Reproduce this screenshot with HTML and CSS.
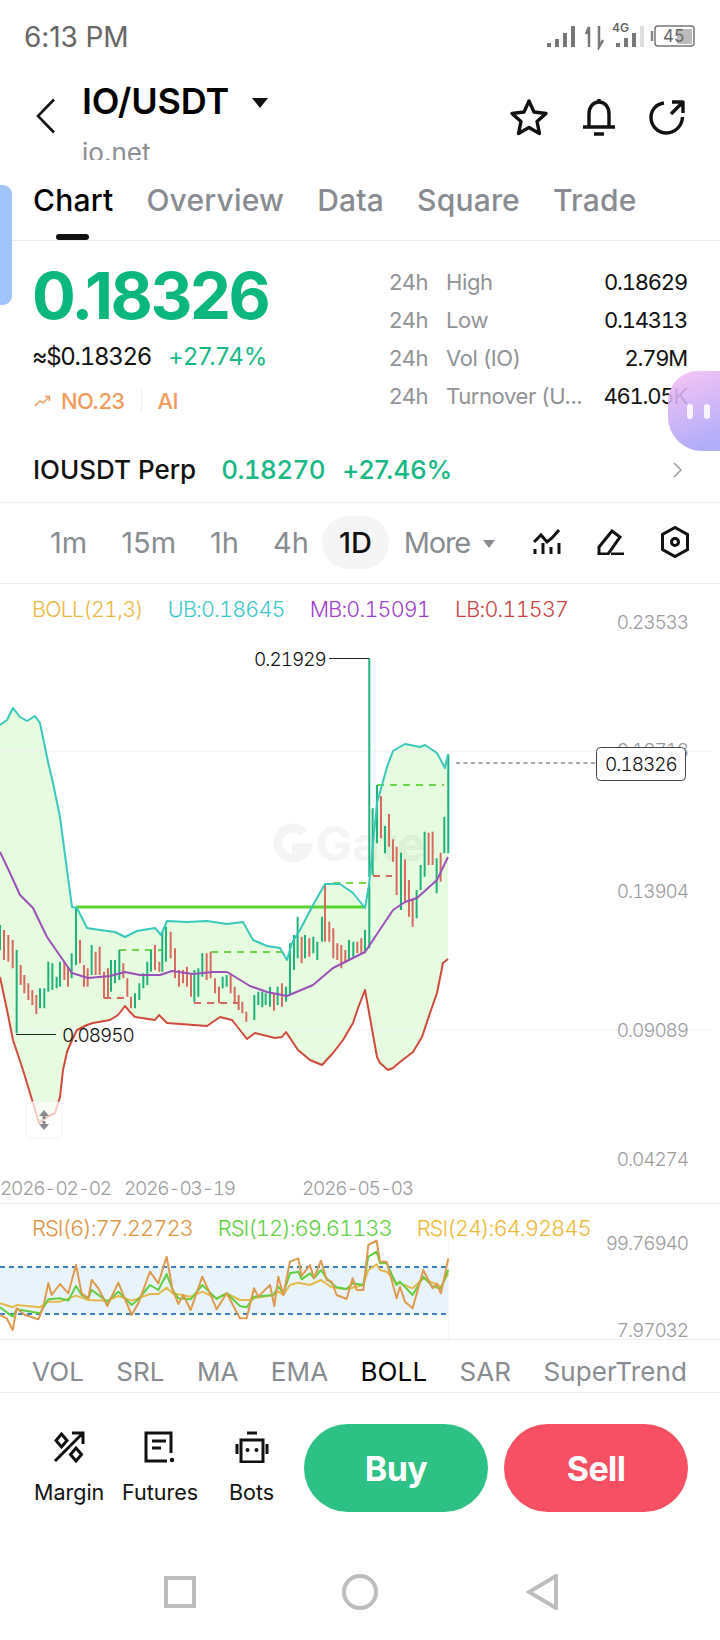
FILE: index.html
```html
<!DOCTYPE html>
<html lang="en">

<head>
    <meta charset="UTF-8">
    <meta name="viewport" content="width=device-width, initial-scale=1.0">
    <title>IO/USDT</title>
    <link rel="stylesheet" href="styles.css">
</head>

<body>
    <div class="page">
        <div class="side-tab"></div>
        <div class="float-bot">
            <span></span>
            <span></span>
        </div>

        <div class="status">
            <span class="status-time">6:13 PM</span>
            <svg class="status-icons" width="150" height="30" viewBox="546 20 150 30">
                <g class="bars">
                    <path d="M549 43v4M557 39v8M565 33v14M573 26v21" />
                    <path d="M618 43v4M626 38v9M634 33v14" />
                    <path class="bar-off" d="M642 26v21" />
                </g>
                <path class="arrows" d="M589 47V27l-3 7M599 26v21l4-7" />
                <text class="net" x="612" y="32">4G</text>
                <rect class="batt" x="655" y="26" width="39" height="20" rx="3" />
                <rect class="batt-fill" x="677" y="29" width="15" height="15" />
                <path class="batt-tip" d="M652 31v10" />
                <text class="batt-num" x="663" y="42">45</text>
            </svg>
        </div>

        <div class="header">
            <svg class="back" width="20" height="36" viewBox="0 0 20 36">
                <path d="M18 1.500 2 18l16 16.500" />
            </svg>
            <div class="title">
                <div class="pair">IO/USDT <i class="caret"></i></div>
                <div class="pair-name">io.net</div>
            </div>
            <div class="header-actions">
                <svg width="40" height="38" viewBox="0 0 40 38">
                    <path d="M20 3l5 11 12 1.500-9 8 2.500 12L20 29.500 9.500 35.500 12 23.500l-9-8L15 14z" />
                </svg>
                <svg width="34" height="40" viewBox="0 0 34 40">
                    <path d="M17 2v3M1 30h32M7 30V17C7 10 11 5 17 5s10 5 10 12v13M12 37h10" />
                </svg>
                <svg width="36" height="36" viewBox="0 0 36 36">
                    <path d="M15 4C7 5 2 11 2 18.500 2 27 9 34 17.500 34S33 27 33.500 18M22 15 33 4M23 3h11v11" />
                </svg>
            </div>
        </div>

        <div class="tabs">
            <span class="tab active">Chart</span>
            <span class="tab">Overview</span>
            <span class="tab">Data</span>
            <span class="tab">Square</span>
            <span class="tab">Trade</span>
        </div>

        <div class="summary">
            <div class="summary-left">
                <div class="price">0.18326</div>
                <div class="price-sub">
                    <span>≈$0.18326</span>
                    <span class="up">+27.74%</span>
                </div>
                <div class="rank">
                    <svg width="17" height="12" viewBox="0 0 17 12">
                        <path d="M1 11l5-5 3 2 6-6M11 1.500h4.500V6" />
                    </svg>
                    <span>NO.23</span>
                    <i class="rank-line"></i>
                    <span>AI</span>
                </div>
            </div>
            <div class="stats">
                <span class="muted">24h</span><span class="muted">High</span><span class="stat-val">0.18629</span>
                <span class="muted">24h</span><span class="muted">Low</span><span class="stat-val">0.14313</span>
                <span class="muted">24h</span><span class="muted">Vol (IO)</span><span class="stat-val">2.79M</span>
                <span class="muted">24h</span><span class="muted">Turnover (U...</span><span class="stat-val">461.05K</span>
            </div>
        </div>

        <div class="perp">
            <span class="perp-name">IOUSDT Perp</span>
            <span class="up perp-last">0.18270</span>
            <span class="up perp-change">+27.46%</span>
            <svg class="perp-arrow" width="10" height="16" viewBox="0 0 10 16">
                <path d="M1 1l7 7-7 7" />
            </svg>
        </div>

        <div class="intervals">
            <span class="interval">1m</span>
            <span class="interval">15m</span>
            <span class="interval">1h</span>
            <span class="interval">4h</span>
            <span class="interval selected">1D</span>
            <span class="interval more">More <i class="caret small"></i></span>
            <div class="chart-tools">
                <svg width="28" height="26" viewBox="0 0 28 26">
                    <path d="M1 13l7-7 6 7 5-4 7-8M2 20v5M10 14v11M18 18v7M26 14v11" />
                </svg>
                <svg width="28" height="26" viewBox="0 0 28 26">
                    <path d="M2 25v-7L15 2l8 6-12 17zM14 25h13" />
                </svg>
                <svg width="28" height="32" viewBox="0 0 28 32">
                    <path d="M14 1.500 26.500 8.500v15L14 30.500 1.500 23.500v-15z" />
                    <circle cx="14" cy="16" r="3.500" />
                </svg>
            </div>
        </div>

        <div class="chart">
            <svg class="canvas" width="720" height="619" viewBox="0 584 720 619">
                <!-- band fill: upper band, then lower band backwards -->
                <polygon class="band" points="0,725 7,720 13,708 20,717 27,721 35,716 40,723 48,762 53,783 60,817 67,870 72,907 77,908 87,928 100,930 115,932 125,937 137,931 155,928 161,935 167,921 187,922 207,921 227,924 243,922 253,940 267,946 280,948 287,960 292,943 300,930 313,905 325,884 340,884 353,893 365,908 369,885 377,803 387,767 393,751 405,744 420,747 425,745 437,753 445,768 448,754 448,959 443,963 437,993 430,1013 422,1037 413,1052 400,1062 393,1068 388,1070 380,1063 377,1057 365,990 358,1008 353,1023 343,1040 333,1053 322,1065 310,1060 298,1050 286,1032 282,1037 275,1038 255,1033 247,1039 232,1020 220,1017 207,1026 167,1023 159,1015 155,1020 135,1017 130,1012 125,1006 118,1015 110,1020 93,1023 87,1025 77,1030 72,1040 67,1052 63,1070 60,1097 55,1113 47,1117 39,1123 33,1103 23,1070 13,1040 7,1010 0,977" />

                <g class="mark">
                    <path class="mark-ring" d="M304 833a15 15 0 1 0 3 15h-15" />
                    <text class="mark-text" x="316" y="861">Gate</text>
                </g>

                <path class="grid" d="M0 751H712M0 1030H712" />

                <text class="axis" x="688" y="629" text-anchor="end">0.23533</text>
                <text class="axis" x="688" y="757" text-anchor="end">0.18718</text>
                <text class="axis" x="688" y="898" text-anchor="end">0.13904</text>
                <text class="axis" x="688" y="1037" text-anchor="end">0.09089</text>
                <text class="axis" x="688" y="1166" text-anchor="end">0.04274</text>

                <text class="axis date" x="0" y="1195">2026-02-02</text>
                <text class="axis date" x="124" y="1195">2026-03-19</text>
                <text class="axis date" x="302" y="1195">2026-05-03</text>

                <path class="dash-green" d="M119 950H162M211 952H290M333 883H369M377 785H444" />
                <path class="dash-red" d="M104 998H131M194 1003H239M373 876H392" />
                <path class="level" d="M76 907H365" />

                <!-- candles below y=880 are in 3x units of the lower half -->
                <g transform="translate(0 880) scale(.3333)">
                    <path class="candle-up" d="M0 135V210M50 210V460M120 325V385M133 325V385M145 245V335M157 250V330M170 290V325M180 245V320M215 220V295M228 85V255M275 195V285M333 240V335M345 240V310M358 210V300M405 340V385M418 310V360M430 280V325M442 245V315M453 210V275M487 155V275M498 140V245M583 270V365M595 265V350M607 220V290M668 290V325M680 285V320M763 345V420M775 335V375M787 335V382M797 340V375M810 320V380M833 320V375M858 320V365M870 190V345M882 165V270M893 110V235M915 165V235M940 170V220M952 185V240M966 110V185M1047 180V240M1060 185V230M1095 150V220M1108 15V205M1250 30V115M1262 -45V30M1310 -65V40" />
                    <path class="candle-down" d="M12 150V240M25 165V245M38 180V265M62 255V315M73 285V340M85 310V360M97 330V375M109 345V402M193 245V300M204 260V320M240 180V250M252 255V320M263 265V320M287 215V285M299 200V285M312 275V355M324 265V355M370 250V295M382 295V350M393 350V385M465 195V270M478 245V275M512 155V235M525 205V295M537 270V320M549 270V310M561 260V320M573 280V350M620 220V300M632 215V295M645 295V340M657 320V370M692 280V340M704 320V370M716 345V390M727 365V400M739 395V425M822 340V392M846 310V380M905 170V250M928 175V230M975 15V185M988 125V185M1000 145V235M1012 190V240M1024 195V265M1036 210V250M1072 185V220M1084 175V220M1190 -100V45M1227 0V110M1238 60V140M1322 -82V5" />
                </g>
                <!-- same again for the part above the fold of the crop -->
                <g transform="translate(0 590) scale(.3333)">
                    <path class="candle-up" d="M1108 205V860M1118 655V855M1131 585V760M1155 708V790M1203 788V960M1274 725V860M1333 680V790M1345 492V790" />
                    <path class="candle-down" d="M1143 618V745M1167 672V770M1179 748V815M1215 808V935M1286 728V825M1298 725V825" />
                </g>

                <polyline class="line-mb" points="0,852 10,873 20,895 33,908 47,937 65,963 72,973 88,978 110,976 125,972 140,975 160,975 172,971 193,974 213,972 227,972 250,986 267,992 287,996 313,985 333,968 365,952 393,910 405,902 417,898 437,880 448,857" />
                <polyline class="line-ub" points="0,725 7,720 13,708 20,717 27,721 35,716 40,723 48,762 53,783 60,817 67,870 72,907 77,908 87,928 100,930 115,932 125,937 137,931 155,928 161,935 167,921 187,922 207,921 227,924 243,922 253,940 267,946 280,948 287,960 292,943 300,930 313,905 325,884 340,884 353,893 365,908 369,885 377,803 387,767 393,751 405,744 420,747 425,745 437,753 445,768 448,754" />
                <polyline class="line-lb" points="0,977 7,1010 13,1040 23,1070 33,1103 39,1123 47,1117 55,1113 60,1097 63,1070 67,1052 72,1040 77,1030 87,1025 93,1023 110,1020 118,1015 125,1006 130,1012 135,1017 155,1020 159,1015 167,1023 207,1026 220,1017 232,1020 247,1039 255,1033 275,1038 282,1037 286,1032 298,1050 310,1060 322,1065 333,1053 343,1040 353,1023 358,1008 365,990 377,1057 380,1063 388,1070 393,1068 400,1062 413,1052 422,1037 430,1013 437,993 443,963 448,959" />

                <path class="leader" d="M329 658.500H369M16 1034.500H56" />
                <text class="mark-price" x="254" y="666">0.21929</text>
                <text class="mark-price" x="62" y="1042">0.08950</text>

                <path class="last-line" d="M456 763H596" />
                <rect class="last-tag" x="596.500" y="747.500" width="89" height="33" rx="4" />
                <text class="mark-price" x="605" y="771">0.18326</text>

                <rect class="resize" x="26" y="1102" width="36" height="36" rx="5" />
                <path class="resize-arrow" d="M44 1110l-5 6h3.500v3h3v-3H49zM44 1130l-5-6h3.500v-3h3v3H49z" />
            </svg>
            <div class="legend">
                <span class="c-boll">BOLL(21,3)</span>
                <span class="c-ub">UB:0.18645</span>
                <span class="c-mb">MB:0.15091</span>
                <span class="c-lb">LB:0.11537</span>
            </div>
        </div>

        <div class="rsi">
            <svg class="canvas" width="720" height="135" viewBox="0 1204 720 135">
                <rect class="rsi-band" x="0" y="1267" width="448" height="47" />
                <path class="rsi-dash" d="M0 1267H448M0 1314H448" />
                <path class="rsi-end" d="M448.500 1240V1339" />
                <text class="axis" x="688" y="1250" text-anchor="end">99.76940</text>
                <text class="axis" x="688" y="1337" text-anchor="end">7.97032</text>
                <g transform="translate(0 1230) scale(.3333)">
                    <polyline class="rsi-24" points="0,220 38,232 50,225 120,232 145,215 180,215 228,197 265,210 322,212 355,198 395,212 415,205 450,192 475,192 500,173 518,190 572,200 607,185 650,205 680,190 720,210 750,210 762,205 820,195 835,185 850,195 870,165 895,158 930,165 963,150 995,172 1040,178 1090,165 1105,120 1130,103 1140,120 1160,125 1190,160 1200,160 1238,175 1270,145 1323,170 1345,130" />
                    <polyline class="rsi-12" points="0,232 38,260 50,238 120,250 145,208 180,205 205,212 228,168 245,195 265,205 275,180 322,215 355,185 395,225 415,208 450,165 475,180 500,132 518,180 535,205 572,208 607,165 650,207 680,190 720,228 740,232 762,200 820,195 835,170 850,190 870,130 895,125 905,148 930,130 942,145 963,120 980,145 995,160 1010,172 1040,177 1058,160 1090,165 1105,80 1130,65 1140,100 1160,100 1190,165 1200,155 1238,195 1270,140 1298,170 1323,175 1345,120" />
                    <polyline class="rsi-6" points="0,255 20,265 38,300 50,235 75,255 115,268 130,230 145,160 155,195 180,162 205,190 228,105 245,190 265,205 275,150 295,175 322,228 355,158 372,200 395,255 415,220 450,125 475,160 500,80 518,180 535,222 550,195 572,240 607,140 630,190 650,238 680,190 720,265 740,265 762,175 775,200 810,165 823,228 835,140 850,195 870,95 895,85 905,138 930,105 942,145 963,92 980,150 995,155 1010,195 1040,207 1058,145 1070,180 1090,180 1105,45 1130,32 1140,95 1160,95 1190,205 1200,170 1215,215 1238,235 1270,120 1298,175 1310,160 1323,190 1345,85" />
                </g>
            </svg>
            <div class="legend rsi-legend">
                <span class="c-rsi6">RSI(6):77.22723</span>
                <span class="c-rsi12">RSI(12):69.61133</span>
                <span class="c-rsi24">RSI(24):64.92845</span>
            </div>
        </div>

        <div class="indicators">
            <span>VOL</span>
            <span>SRL</span>
            <span>MA</span>
            <span>EMA</span>
            <span class="on">BOLL</span>
            <span>SAR</span>
            <span>SuperTrend</span>
        </div>

        <div class="actions">
            <div class="action margin-link">
                <svg width="32" height="32" viewBox="0 0 32 32">
                    <path d="M2 30 30 2M19 2h11v11M8.500 3 14 9.500 8.500 16 3 9.500zM23 17l5.500 6.500L23 30l-5.500-6.500z" />
                </svg>
                <span>Margin</span>
            </div>
            <div class="action futures-link">
                <svg width="32" height="32" viewBox="0 0 32 32">
                    <path d="M27 22V2H2v28h21M8 10h14M8 17h9" />
                    <circle class="dot" cx="28" cy="29" r="2.200" />
                </svg>
                <span>Futures</span>
            </div>
            <div class="action bots-link">
                <svg width="36" height="32" viewBox="0 0 36 32">
                    <path d="M13 2h10M7 9h22v22H7zM3 13v10M33 13v10" />
                    <circle class="dot" cx="13.500" cy="19" r="2" />
                    <circle class="dot" cx="22.500" cy="19" r="2" />
                </svg>
                <span>Bots</span>
            </div>
            <button class="trade buy">Buy</button>
            <button class="trade sell">Sell</button>
        </div>

        <div class="nav">
            <svg class="nav-square" width="32" height="32" viewBox="0 0 32 32">
                <rect x="2" y="2" width="28" height="28" />
            </svg>
            <svg width="36" height="36" viewBox="0 0 36 36">
                <circle cx="18" cy="18" r="16" />
            </svg>
            <svg width="32" height="36" viewBox="0 0 32 36">
                <path d="M30 2v32L3 18z" />
            </svg>
        </div>
    </div>
</body>

</html>
```

FILE: styles.css
```css
body {
    margin: 0;
    background: white;
    font-family: Inter, "Liberation Sans", sans-serif;
    color: #111;
}

.page {
    position: relative;
    width: 720px;
    height: 1640px;
    overflow: hidden;
}

svg {
    display: block;
    flex: none;
}

/* Things that float over the page */
.side-tab {
    position: absolute;
    left: 0;
    top: 185px;
    width: 12px;
    height: 120px;
    background-color: #a0c4fb;
    border-radius: 0 9px 9px 0;
}

.float-bot {
    position: absolute;
    left: 668px;
    top: 371px;
    width: 60px;
    height: 80px;
    border-radius: 30px 0 0 34px;
    background: linear-gradient(160deg, #f7bdf2, #a9a3fa 85%);
    opacity: 0.88;
    display: flex;
    justify-content: center;
    align-items: center;
    gap: 11px;
    padding-left: 4px;
    padding-right: 4px;
    box-sizing: border-box;
    z-index: 2;
}

.float-bot span {
    width: 6px;
    height: 15px;
    background: white;
    border-radius: 4px;
    opacity: 0.85;
}

/* Status bar */
.status {
    height: 74px;
    display: flex;
    justify-content: space-between;
    align-items: center;
    padding: 0 24px 0 24px;
    box-sizing: border-box;
}

.status-time {
    font-size: 28px;
    color: #666;
    letter-spacing: -0.1px;
}

.status-icons {
    margin-right: 0;
    margin-top: -4px;
}

.bars path {
    fill: none;
    stroke: #777;
    stroke-width: 4px;
}

.bars .bar-off {
    stroke: #ddd;
}

.arrows {
    fill: none;
    stroke: #777;
    stroke-width: 2.5px;
}

.net {
    font-size: 12px;
    font-weight: 600;
    fill: #666;
}

.batt {
    fill: none;
    stroke: #777;
    stroke-width: 1.500px;
}

.batt-fill {
    fill: #bbb;
}

.batt-tip {
    stroke: #888;
    stroke-width: 2.5px;
}

.batt-num {
    font-size: 17px;
    fill: #666;
}

/* Header */
.header {
    height: 86px;
    display: flex;
    padding-left: 36px;
    position: relative;
    overflow: hidden;
}

.back {
    margin-top: 24px;
}

.back path {
    fill: none;
    stroke: #111;
    stroke-width: 2.6px;
}

.title {
    margin-left: 26px;
    margin-top: 5px;
}

.pair {
    font-size: 36px;
    font-weight: 600;
    line-height: 44px;
    color: #000;
    letter-spacing: -0.2px;
    display: flex;
    align-items: center;
}

.caret {
    display: inline-block;
    width: 0;
    height: 0;
    border-left: 8px solid transparent;
    border-right: 8px solid transparent;
    border-top: 10px solid #111;
    margin-left: 23px;
    margin-top: 4px;
}

.caret.small {
    border-left-width: 6px;
    border-right-width: 6px;
    border-top: 8px solid #888c90;
    margin-left: 6px;
    margin-top: 0;
    vertical-align: 5px;
}

.pair-name {
    font-size: 26px;
    line-height: 30px;
    color: #8a8d91;
    margin-top: 15px;
}

.header-actions {
    position: absolute;
    left: 509px;
    top: 23px;
    display: flex;
    gap: 33px;
    align-items: center;
}

.header-actions path {
    fill: none;
    stroke: #111;
    stroke-width: 3.4px;
    stroke-linejoin: round;
}

/* Tabs */
.tabs {
    height: 81px;
    box-sizing: border-box;
    border-bottom: 1px solid #eeeeee;
    display: flex;
    gap: 33px;
    padding: 19px 0 0 33px;
}

.tab {
    position: relative;
    height: 60px;
    font-size: 30px;
    line-height: 42px;
    font-weight: 500;
    letter-spacing: 0.2px;
    color: #888c90;
}

.tab.active {
    color: #000;
}

.tab.active::after {
    content: "";
    position: absolute;
    left: 23px;
    top: 55px;
    width: 33px;
    height: 6px;
    border-radius: 3px;
    background: #111;
}

/* Price summary */
.summary {
    height: 200px;
    display: flex;
    padding-left: 32px;
    box-sizing: border-box;
}

.summary-left {
    width: 357px;
}

.price {
    font-size: 65px;
    font-weight: 700;
    line-height: 70px;
    margin-top: 20px;
    color: #0bb67f;
    letter-spacing: -2.4px;
}

.price-sub {
    margin-top: 10px;
    font-size: 24px;
    line-height: 32px;
    display: flex;
    gap: 17px;
    letter-spacing: -1.3px;
    font-variant-numeric: tabular-nums;
}

.price-sub .up {
    font-variant-numeric: normal;
    letter-spacing: 0.2px;
}

.up {
    color: #16b884;
}

.rank {
    margin-top: 13px;
    display: flex;
    align-items: center;
    font-size: 22px;
    font-weight: 500;
    line-height: 30px;
    color: #f29b5c;
    letter-spacing: -0.6px;
}

.rank svg {
    margin-left: 2px;
    margin-right: 10px;
}

.rank path {
    fill: none;
    stroke: #f29b5c;
    stroke-width: 1.500px;
}

.rank-line {
    width: 1px;
    height: 24px;
    background: #f3eee8;
    margin: 0 16px;
}

.stats {
    margin-top: 22px;
    width: 298px;
    height: 152px;
    display: grid;
    grid-template-columns: 57px 1fr auto;
    grid-auto-rows: 38px;
    align-items: center;
    font-size: 22px;
}

.muted {
    color: #909396;
    letter-spacing: -0.4px;
}

.stat-val {
    text-align: right;
    color: #111;
    font-variant-numeric: tabular-nums;
    letter-spacing: -1.2px;
}

/* Perp row */
.perp {
    height: 62px;
    box-sizing: border-box;
    border-bottom: 1px solid #eeeeee;
    padding: 0 37px 4px 33px;
    display: flex;
    align-items: center;
    gap: 17px;
    font-size: 26px;
    font-weight: 500;
}

.perp-name {
    margin-right: 8px;
    color: #111;
}

.perp-last {
    font-variant-numeric: tabular-nums;
    letter-spacing: -0.6px;
}

.perp-change {
    letter-spacing: -0.2px;
}

.perp-arrow {
    margin-left: auto;
}

.perp-arrow path {
    fill: none;
    stroke: #999;
    stroke-width: 1.500px;
}

/* Interval row */
.intervals {
    height: 81px;
    box-sizing: border-box;
    border-bottom: 1px solid #eeeeee;
    padding: 0 0 2px 33px;
    display: flex;
    align-items: center;
    font-size: 29px;
    color: #888c90;
}

.interval {
    padding: 0 17px;
    height: 53px;
    line-height: 53px;
    border-radius: 26px;
    white-space: nowrap;
}

.interval.selected {
    background: #f5f5f5;
    color: #111;
    font-weight: 500;
    margin-left: -4px;
}

.interval.more {
    letter-spacing: -1.2px;
    padding-left: 15px;
}

.chart-tools {
    position: absolute;
    left: 533px;
    display: flex;
    align-items: center;
    gap: 36px;
}

.chart-tools svg {
    fill: none;
    stroke: #111;
    stroke-width: 3px;
}

/* Main chart */
.chart {
    position: relative;
    height: 620px;
    box-sizing: border-box;
    border-bottom: 1px solid #eeeeee;
}

.canvas {
    position: absolute;
    left: 0;
    top: 0;
}

.legend {
    position: relative;
    display: flex;
    gap: 25px;
    padding: 11px 0 0 32px;
    font-size: 21.500px;
    font-weight: 300;
    line-height: 28px;
    letter-spacing: -0.8px;
    white-space: nowrap;
    font-variant-numeric: tabular-nums;
}

.c-boll { color: #eab73f; }
.c-ub { color: #3cc8c8; }
.c-mb { color: #a03fd0; }
.c-lb { color: #c94444; }

.band {
    fill: #e6fbe0;
}

.mark {
    opacity: 0.04;
}

.mark-ring {
    fill: none;
    stroke: #000;
    stroke-width: 9px;
}

.mark-text {
    font-size: 48px;
    font-weight: 700;
    fill: #000;
}

.grid {
    stroke: #efefef;
    stroke-width: 1px;
}

.axis {
    font-size: 19px;
    font-weight: 300;
    fill: #9a9c9e;
    letter-spacing: -1.1px;
    font-variant-numeric: tabular-nums;
}

.axis.date {
    font-size: 19px;
    letter-spacing: -1.2px;
}

.dash-green {
    fill: none;
    stroke: #6fd74c;
    stroke-width: 2px;
    stroke-dasharray: 7 6;
}

.dash-red {
    fill: none;
    stroke: #d06a5f;
    stroke-width: 2px;
    stroke-dasharray: 7 6;
}

.level {
    stroke: #5ad431;
    stroke-width: 3px;
}

.candle-up {
    fill: none;
    stroke: #1fb27a;
    stroke-width: 6px;
}

.candle-down {
    fill: none;
    stroke: #d8695f;
    stroke-width: 6px;
}

.line-ub,
.line-mb,
.line-lb {
    fill: none;
    stroke-width: 2px;
    stroke-linejoin: round;
}

.line-ub { stroke: #37c9bb; }
.line-mb { stroke: #9b51b8; }
.line-lb { stroke: #cf4a3c; }

.leader {
    fill: none;
    stroke: #222;
    stroke-width: 1px;
}

.mark-price {
    font-size: 19px;
    font-weight: 300;
    fill: #111;
    letter-spacing: -1px;
    font-variant-numeric: tabular-nums;
}

.last-line {
    stroke: #555;
    stroke-width: 1px;
    stroke-dasharray: 4 3.500;
}

.last-tag {
    fill: white;
    stroke: #444;
    stroke-width: 1px;
}

.resize {
    fill: rgba(255, 255, 255, 0.7);
    stroke: #f2f2f2;
    stroke-width: 1px;
}

.resize-arrow {
    fill: #8a8a8a;
}

/* RSI panel */
.rsi {
    position: relative;
    height: 136px;
    box-sizing: border-box;
    border-bottom: 1px solid #eeeeee;
}

.rsi-legend {
    font-size: 22px;
    padding-top: 10px;
    letter-spacing: -1.05px;
}

.rsi-band {
    fill: #e8f3fc;
}

.rsi-dash {
    fill: none;
    stroke: #3d80c2;
    stroke-width: 2px;
    stroke-dasharray: 5 4;
}

.rsi-end {
    stroke: #f4f4f4;
    stroke-width: 1px;
}

.rsi-6,
.rsi-12,
.rsi-24 {
    fill: none;
    stroke-width: 6px;
    stroke-linejoin: round;
}

.rsi-6 { stroke: #dd9a4e; }
.rsi-12 { stroke: #5fcf3f; }
.rsi-24 { stroke: #e6b84a; }

.c-rsi6 { color: #dd9544; }
.c-rsi12 { color: #5fd03f; }
.c-rsi24 { color: #eabb3a; }

/* Indicator names */
.indicators {
    height: 53px;
    box-sizing: border-box;
    border-bottom: 1px solid #eeeeee;
    padding: 10px 33px 0 32px;
    display: flex;
    justify-content: space-between;
    align-items: center;
    font-size: 26px;
    letter-spacing: 0.1px;
    color: #888c90;
}

.indicators .on {
    color: #000;
}

/* Bottom actions */
.actions {
    height: 140px;
    position: relative;
    display: flex;
    padding: 31px 32px 0 0;
    box-sizing: border-box;
    gap: 16px;
    justify-content: flex-end;
}

.action {
    position: absolute;
    top: 38px;
    display: flex;
    flex-direction: column;
    align-items: center;
    gap: 16px;
    font-size: 21.500px;
    line-height: 26px;
    color: #111;
}

.margin-link { left: 34px; }
.futures-link { left: 122px; }
.bots-link { left: 229px; }

.action path {
    fill: none;
    stroke: #111;
    stroke-width: 3px;
}

.action .dot {
    fill: #111;
}

.trade {
    width: 184px;
    height: 88px;
    border: none;
    border-radius: 44px;
    color: white;
    font-family: inherit;
    font-size: 34px;
    font-weight: 700;
    letter-spacing: -0.6px;
}

.buy {
    background-color: #2dc185;
}

.sell {
    background-color: #f74f63;
}

/* Android nav */
.nav {
    height: 108px;
    position: relative;
    display: flex;
    justify-content: center;
    align-items: center;
    gap: 148px;
    padding-top: 10px;
    box-sizing: border-box;
}

.nav-square {
    margin-left: 2px;
    margin-right: -2px;
}

.nav rect,
.nav circle,
.nav path {
    fill: none;
    stroke: #bdbdbd;
    stroke-width: 4px;
}
```
